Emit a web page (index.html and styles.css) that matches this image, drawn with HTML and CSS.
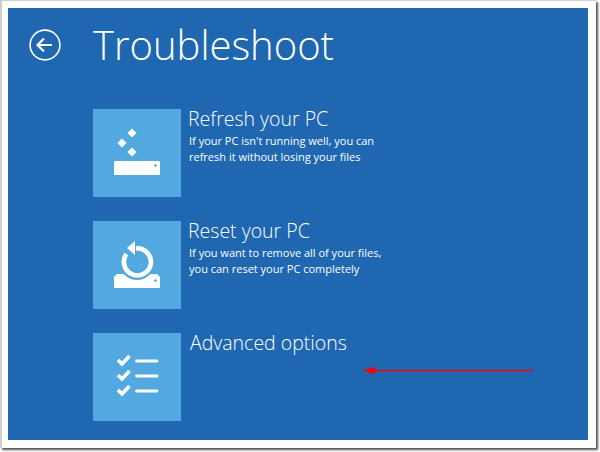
FILE: index.html
```html
<!DOCTYPE html>
<html lang="en">
<head>
<meta charset="utf-8">
<title>Troubleshoot</title>
<link rel="stylesheet" href="styles.css">
</head>
<body>
<div class="frame">
  <main class="screen">
    <header class="head">
      <svg class="back" width="32" height="32" viewBox="0 0 32 32" aria-hidden="true">
        <circle cx="16" cy="16" r="14.900" fill="none" stroke="#fff" stroke-width="1.600"/>
        <path d="M8 16H23M15 9.500L8.500 16L15 22.500" fill="none" stroke="#fff" stroke-width="2.200"/>
      </svg>
      <h1 class="title">Troubleshoot</h1>
    </header>
    <section class="option">
      <div class="tile">
        <svg width="88" height="88" viewBox="0 0 88 88" aria-hidden="true">
          <path d="M39 19.500L43.500 24L39 28.500L34.500 24ZM29 29.500L33.500 34L29 38.500L24.500 34ZM39 38.500L43.500 43L39 47.500L34.500 43Z" fill="#fff"/>
          <path d="M22 52H66L67 53V66H21V53Z" fill="#fff"/>
          <path d="M61 56.500H64M62.500 55V58" stroke="#53a9df" stroke-width="1"/>
        </svg>
      </div>
      <div class="copy">
        <h2 class="name">Refresh your PC</h2>
        <p class="desc">If your PC isn't running well, you can<br>refresh it without losing your files</p>
      </div>
    </section>
    <section class="option">
      <div class="tile">
        <svg width="88" height="88" viewBox="0 0 88 88" aria-hidden="true">
          <path d="M24 53H64L67 56V67H21V56Z" fill="#fff"/>
          <circle cx="44" cy="41" r="18" fill="#53a9df"/>
          <path d="M61 59.500H64M62.500 58V61" stroke="#53a9df" stroke-width="1"/>
          <path d="M33.500 33A13.500 13.500 0 1 0 43 27.500" fill="none" stroke="#fff" stroke-width="4.600"/>
          <path d="M42 20V34L34 27Z" fill="#fff"/>
        </svg>
      </div>
      <div class="copy">
        <h2 class="name">Reset your PC</h2>
        <p class="desc">If you want to remove all of your files,<br>you can reset your PC completely</p>
      </div>
    </section>
    <section class="option last">
      <div class="tile">
        <svg width="88" height="88" viewBox="0 0 88 88" aria-hidden="true">
          <path d="M25 27L29 31L36.500 23M25 42L29 46L36.500 38M25 57L29 61L36.500 53" fill="none" stroke="#fff" stroke-width="3.600"/>
          <path d="M43.500 28H64M43.500 43H64M43.500 58H64" fill="none" stroke="#fff" stroke-width="2.800" stroke-linecap="round"/>
        </svg>
      </div>
      <div class="copy">
        <h2 class="name wide">Advanced options</h2>
      </div>
      <svg class="arrow" width="172" height="11" viewBox="0 0 172 11" aria-hidden="true">
        <path d="M170 5.500H10" stroke="#f00" stroke-width="1.500"/>
        <path d="M0 5.500L12 1.500V9.500Z" fill="#f00"/>
      </svg>
    </section>
  </main>
</div>
</body>
</html>
```
FILE: styles.css
```css
* { box-sizing: border-box; }
html, body { margin: 0; padding: 0; }
body {
  width: 600px;
  height: 452px;
  overflow: hidden;
  background: #fff;
  font-family: "Open Sans", "Noto Sans", sans-serif;
  color: #fff;
}
.frame {
  width: 596px;
  height: 448px;
  padding: 7px 7px 8px 6px;
  background: #fff;
  border-top: 1px solid #cfcfcf;
  border-left: 2px solid #cfcfcf;
  box-shadow: 2px 2px 2px #555;
}
.screen {
  position: relative;
  width: 580px;
  height: 432px;
  background: #1f67b1;
  padding-left: 85px;
}
.head {
  height: 101px;
  display: flex;
  align-items: flex-start;
}
.back {
  position: absolute;
  left: 21px;
  top: 21px;
}
.title {
  margin: 9px 0 0 0;
  font-size: 40px;
  line-height: 56px;
  font-weight: 300;
}
.option {
  position: relative;
  display: flex;
  height: 88px;
  margin-bottom: 24px;
}
.tile {
  flex: none;
  width: 88px;
  height: 88px;
  background: #53a9df;
}
.tile svg { display: block; }
.copy { padding-left: 7px; }
.name {
  margin: -2px 0 0 0;
  font-size: 19.500px;
  line-height: 24px;
  font-weight: 300;
  white-space: nowrap;
}
.wide { padding-left: 2px; }
.desc {
  margin: 2px 0 0 1px;
  font-size: 11px;
  line-height: 16px;
  white-space: nowrap;
}
.arrow {
  position: absolute;
  left: 270px;
  top: 32px;
}
```
